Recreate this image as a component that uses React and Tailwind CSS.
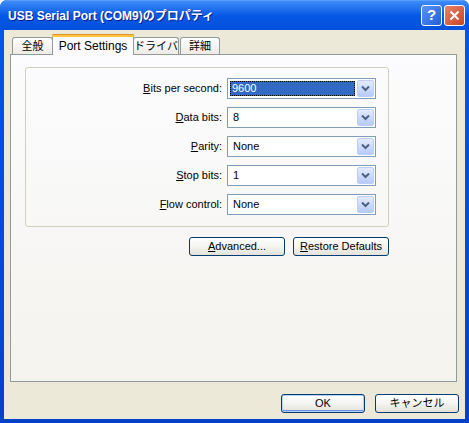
import React from 'react';

const UI_FONT = "font-['Liberation_Sans','Noto_Sans_CJK_JP',sans-serif]";

// Mnemonic label: underline one letter
const Mn = ({ text, idx = 0 }) => (
    <>
        {text.slice(0, idx)}
        <span className="underline underline-offset-[1px]">{text[idx]}</span>
        {text.slice(idx + 1)}
    </>
);

const Chevron = () => (
    <svg width="9" height="7" viewBox="0 0 9 7">
        <path d="M1 1.5 L4.5 5 L8 1.5" fill="none" stroke="#4D6185" strokeWidth="2" />
    </svg>
);

const Combo = ({ value, focused }) => (
    <div className="w-[149px] h-[21px] border border-[#7F9DB9] bg-white flex items-stretch p-[1px]">
        <div className="flex-1 flex items-center pl-[1px] pr-[2px]">
            {focused ? (
                <div className="w-full h-[15px] bg-[#316AC5] text-white outline-1 outline-dotted outline-[#000] -outline-offset-1 flex items-center pl-[2px]">
                    {value}
                </div>
            ) : (
                <span className="pl-[3px]">{value}</span>
            )}
        </div>
        <div className="w-[17px] rounded-[2px] border border-[#BCCEF5] bg-gradient-to-b from-[#E3EBFD] to-[#B7CBF8] flex items-center justify-center">
            <Chevron />
        </div>
    </div>
);

const XpButton = ({ children, width = 'w-[96px]', isDefault }) => (
    <button
        type="button"
        className={`${width} h-[19px] rounded-[3px] border border-[#003C74] bg-gradient-to-b from-[#FFFFFF] via-[#F4F4F0] to-[#E3E2DA] text-[11px] text-black leading-none ${isDefault ? 'shadow-[inset_0_0_0_1px_#B8D0F7,inset_0_-1px_0_1px_#6B94E0]' : ''}`}
    >
        {children}
    </button>
);

const rows = [
    { label: 'Bits per second:', idx: 0, value: '9600', focused: true },
    { label: 'Data bits:', idx: 0, value: '8' },
    { label: 'Parity:', idx: 0, value: 'None' },
    { label: 'Stop bits:', idx: 0, value: '1' },
    { label: 'Flow control:', idx: 0, value: 'None' },
];

const tabIdle = 'h-[17px] border border-b-0 border-[#919B9C] rounded-t-[3px] bg-gradient-to-b from-white to-[#ECEBE6] flex items-center justify-center text-[11px] whitespace-nowrap';

const App = () => {
    return (
        <div className={`w-[469px] h-[423px] bg-white ${UI_FONT}`}>
            <div className="w-full h-full rounded-t-[7px] bg-gradient-to-b from-[#0058EE] to-[#0541C8] flex flex-col overflow-hidden">
                {/* Title bar */}
                <div className="h-[30px] shrink-0 flex items-center pl-[8px] pr-[4px] bg-gradient-to-b from-[#3D8CF7] via-[#0558E6] to-[#0451DB] border-t border-[#5A9CFF]">
                    <span className="flex-1 text-white font-bold text-[12px] [text-shadow:1px_1px_#0F1A8A]">
                        USB Serial Port (COM9)のプロパティ
                    </span>
                    <div className="flex gap-[2px]">
                        <div className="w-[21px] h-[21px] rounded-[3px] border border-white bg-gradient-to-br from-[#5B93F5] to-[#1F5ED8] flex items-center justify-center text-white font-bold text-[15px]">
                            ?
                        </div>
                        <div className="w-[21px] h-[21px] rounded-[3px] border border-white bg-gradient-to-br from-[#E8806A] to-[#C8431F] flex items-center justify-center">
                            <svg width="11" height="11" viewBox="0 0 11 11">
                                <path d="M1.5 1.5 L9.5 9.5 M9.5 1.5 L1.5 9.5" stroke="white" strokeWidth="2" />
                            </svg>
                        </div>
                    </div>
                </div>

                {/* Client area */}
                <div className="flex-1 mx-[4px] mb-[4px] bg-[#ECE9D8] flex flex-col text-[11px] text-black">
                    {/* Tabs */}
                    <div className="flex items-end pl-[8px] pt-[4px] h-[24px]">
                        <div className={`${tabIdle} w-[41px] mr-[-1px]`}>全般</div>
                        <div className="relative z-10 w-[82px] h-[21px] mb-[-1px] border border-b-0 border-[#919B9C] rounded-t-[3px] bg-[#FCFCFE] flex flex-col">
                            <div className="h-[3px] rounded-t-[2px] bg-[#FFC83C] border-t border-[#E68B2C] mx-[-1px] mt-[-1px]" />
                            <div className="flex-1 flex items-center justify-center text-[12px] whitespace-nowrap">Port Settings</div>
                        </div>
                        <div className={`${tabIdle} w-[46px] ml-[-1px]`}>ドライバ</div>
                        <div className={`${tabIdle} w-[40px] ml-[1px]`}>詳細</div>
                    </div>

                    {/* Tab panel */}
                    <div className="ml-[6px] w-[447px] h-[328px] border border-[#919B9C] bg-gradient-to-b from-[#FCFCFE] to-[#F4F3EE] pt-[12px] pl-[14px]">
                        <div className="w-[364px] rounded-[3px] border border-[#D0D0BF] pt-[10px] pb-[11px] flex flex-col gap-[8px]">
                            {rows.map(r => (
                                <div key={r.label} className="flex items-center">
                                    <div className="w-[196px] text-right">
                                        <Mn text={r.label} idx={r.idx} />
                                    </div>
                                    <div className="ml-[5px]">
                                        <Combo value={r.value} focused={r.focused} />
                                    </div>
                                </div>
                            ))}
                        </div>
                        <div className="w-[364px] flex justify-end gap-[8px] mt-[10px]">
                            <XpButton><Mn text="Advanced..." idx={0} /></XpButton>
                            <XpButton><Mn text="Restore Defaults" idx={0} /></XpButton>
                        </div>
                    </div>

                    {/* Dialog buttons */}
                    <div className="flex justify-end gap-[10px] pr-[6px] mt-[12px]">
                        <XpButton width="w-[84px]" isDefault>OK</XpButton>
                        <XpButton width="w-[84px]">キャンセル</XpButton>
                    </div>
                </div>
            </div>
        </div>
    );
};

export default App;
